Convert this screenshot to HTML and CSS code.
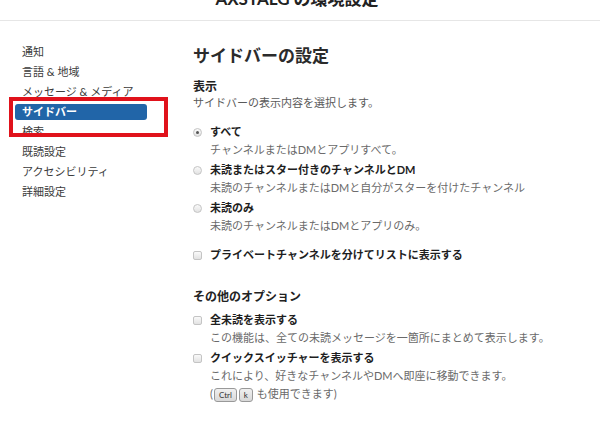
FILE: index.html
```html
<!DOCTYPE html>
<html lang="ja">
<head>
<meta charset="utf-8">
<link rel="stylesheet" href="styles.css">
</head>
<body>
<header class="topbar"><div class="title">AXSTALG の環境設定</div></header>
<div class="layout">
  <nav class="side">
    <div class="item">通知</div>
    <div class="item">言語 &amp; 地域</div>
    <div class="item">メッセージ &amp; メディア</div>
    <div class="item active">サイドバー</div>
    <div class="item">検索</div>
    <div class="item">既読設定</div>
    <div class="item">アクセシビリティ</div>
    <div class="item">詳細設定</div>
  </nav>
  <main class="content">
    <h1 class="heading">サイドバーの設定</h1>
    <h2 class="sub">表示</h2>
    <p class="lead">サイドバーの表示内容を選択します。</p>
    <div class="options">
      <div class="opt">
        <span class="radio checked"></span>
        <div class="txt"><div class="label">すべて</div><div class="desc">チャンネルまたはDMとアプリすべて。</div></div>
      </div>
      <div class="opt">
        <span class="radio"></span>
        <div class="txt"><div class="label">未読またはスター付きのチャンネルとDM</div><div class="desc">未読のチャンネルまたはDMと自分がスターを付けたチャンネル</div></div>
      </div>
      <div class="opt">
        <span class="radio"></span>
        <div class="txt"><div class="label">未読のみ</div><div class="desc">未読のチャンネルまたはDMとアプリのみ。</div></div>
      </div>
      <div class="opt single">
        <span class="check"></span>
        <div class="txt"><div class="label">プライベートチャンネルを分けてリストに表示する</div></div>
      </div>
    </div>
    <h2 class="sub other">その他のオプション</h2>
    <div class="options tight">
      <div class="opt">
        <span class="check"></span>
        <div class="txt"><div class="label">全未読を表示する</div><div class="desc">この機能は、全ての未読メッセージを一箇所にまとめて表示します。</div></div>
      </div>
      <div class="opt">
        <span class="check"></span>
        <div class="txt"><div class="label">クイックスイッチャーを表示する</div><div class="desc">これにより、好きなチャンネルやDMへ即座に移動できます。</div><div class="desc">(<kbd class="key">Ctrl</kbd><kbd class="key">k</kbd> も使用できます)</div></div>
      </div>
    </div>
  </main>
</div>
</body>
</html>
```
FILE: styles.css
```css
* { box-sizing: border-box; }
html, body { margin: 0; padding: 0; background: #fff; }
body {
  font-family: Lato, "Noto Sans CJK JP", sans-serif;
  color: #2c2d30;
  width: 600px;
  height: 427px;
  overflow: hidden;
}
.topbar {
  height: 21px;
  border-bottom: 1px solid #e6e6e6;
  overflow: hidden;
}
.title {
  margin-top: -11px;
  text-align: center;
  font-size: 17px;
  font-weight: 700;
  line-height: 20px;
  color: #222;
  padding-right: 6px;
}
.layout { display: flex; }
.side {
  width: 193px;
  padding-top: 21px;
  padding-left: 15px;
}
.item {
  height: 20px;
  line-height: 20px;
  font-size: 11px;
  color: #3b3b3b;
  padding-left: 7px;
  width: 132px;
}
.item.active {
  position: relative;
  height: 16px;
  line-height: 16px;
  margin: 2px 0;
  background: #2165a8;
  color: #fff;
  font-weight: 700;
  border-radius: 3px;
}
.item.active::after {
  content: "";
  position: absolute;
  left: -6px;
  top: -7px;
  width: 151px;
  height: 32px;
  border: 4px solid #e0121b;
}
.content { flex: 1; padding-top: 25px; }
.heading {
  margin: 0;
  font-size: 17px;
  line-height: 20px;
  font-weight: 700;
  color: #2b2b2b;
}
.sub {
  margin: 13px 0 0;
  font-size: 12px;
  line-height: 16px;
  font-weight: 700;
  color: #222;
}
.sub.other { margin-top: 25px; }
.lead {
  margin: 0;
  font-size: 11px;
  line-height: 16px;
  color: #5a5a5a;
}
.options { margin-top: 12px; display: flex; flex-direction: column; gap: 2px; }
.options.tight { margin-top: 6px; }
.opt { display: flex; align-items: flex-start; }
.opt.single { margin-top: 9px; }
.txt { padding-left: 8px; }
.label {
  font-size: 11px;
  line-height: 18px;
  font-weight: 700;
  color: #1e1e1e;
}
.desc {
  font-size: 11px;
  line-height: 18px;
  color: #6a6a6a;
}
.radio, .check {
  flex: none;
  width: 9px;
  height: 9px;
  margin-top: 5px;
  border: 1px solid #c4c4c4;
  background: linear-gradient(#fafafa, #e2e2e2);
}
.radio { border-radius: 50%; position: relative; }
.radio.checked::after {
  content: "";
  position: absolute;
  left: 2px;
  top: 2px;
  width: 3px;
  height: 3px;
  border-radius: 50%;
  background: #555;
}
.check { border-radius: 2px; }
.key {
  display: inline-block;
  font-family: Lato, sans-serif;
  font-size: 8px;
  line-height: 12px;
  padding: 0 4px;
  margin: 0 1px;
  background: linear-gradient(#f0f0f0, #d8d8d8);
  border: 1px solid #999;
  border-radius: 3px;
  color: #333;
  vertical-align: middle;
}
```
